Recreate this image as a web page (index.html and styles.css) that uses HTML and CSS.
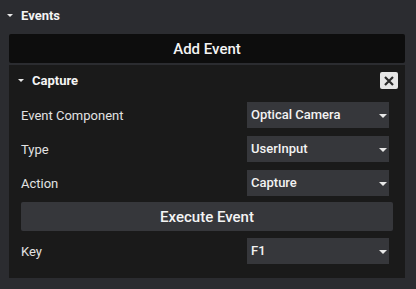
FILE: index.html
```html
<!DOCTYPE html>
<html lang="en">
<head>
<meta charset="UTF-8">
<title>Events</title>
<link rel="stylesheet" href="styles.css">
</head>
<body>
    <div class="section">
        <div class="section-header">
            <span class="caret"></span>
            <span class="section-title">Events</span>
        </div>
        <button type="button" class="add-button">Add Event</button>

        <div class="panel">
            <div class="panel-header">
                <span class="caret"></span>
                <span class="panel-title">Capture</span>
                <button type="button" class="close-button">
                    <svg width="10" height="10" viewBox="0 0 10 10">
                        <path d="M1 1 L9 9 M9 1 L1 9" stroke="#2a2a2a" stroke-width="2.2"/>
                    </svg>
                </button>
            </div>
            <div class="panel-body">
                <div class="row">
                    <span class="label">Event Component</span>
                    <div class="dropdown">Optical Camera<span class="arrow"></span></div>
                </div>
                <div class="row">
                    <span class="label">Type</span>
                    <div class="dropdown">UserInput<span class="arrow"></span></div>
                </div>
                <div class="row">
                    <span class="label">Action</span>
                    <div class="dropdown">Capture<span class="arrow"></span></div>
                </div>
                <button type="button" class="execute-button">Execute Event</button>
                <div class="row">
                    <span class="label">Key</span>
                    <div class="dropdown">F1<span class="arrow"></span></div>
                </div>
            </div>
        </div>
    </div>
</body>
</html>
```

FILE: styles.css
```css
body {
    margin: 0;
    padding: 0;
    width: 416px;
    height: 289px;
    overflow: hidden;
    background: #2b2c30;
    font-family: Roboto, "Liberation Sans", sans-serif;
    color: #f2f2f2;
}

.section {
    padding: 0 11px 0 9px;
}

.section-header {
    display: flex;
    align-items: center;
    height: 30px;
    margin-left: -2px;
}

.caret {
    width: 0;
    height: 0;
    border-left: 3px solid transparent;
    border-right: 3px solid transparent;
    border-top: 3px solid #e8e8e8;
    margin-right: 8px;
}

.section-title,
.panel-title {
    font-size: 13px;
    font-weight: 700;
    color: #f4f4f4;
}

button {
    font-family: Roboto, "Liberation Sans", sans-serif;
    border: none;
    outline: none;
    padding: 0;
}

.add-button {
    display: block;
    width: 100%;
    height: 29px;
    margin-top: 4px;
    background: #0d0d0d;
    color: #f4f4f4;
    font-size: 15px;
    font-weight: 500;
    border-radius: 2px;
}

.panel {
    margin-top: 2px;
    background: #1a1a1a;
    padding-bottom: 14px;
}

.panel-header {
    display: flex;
    align-items: center;
    height: 30px;
    padding: 0 7px 0 9px;
}

.panel-title {
    flex: 1;
}

.close-button {
    width: 18px;
    height: 17px;
    background: #e6e6e6;
    border-radius: 2px;
    display: flex;
    justify-content: center;
    align-items: center;
    margin-top: 1px;
}

.panel-body {
    display: flex;
    flex-direction: column;
    gap: 8px;
    padding: 7px 12px 0 12px;
}

.row {
    display: flex;
    align-items: center;
    justify-content: space-between;
    height: 26px;
}

.label {
    font-size: 13px;
    color: #e2e2e2;
}

.dropdown {
    position: relative;
    width: 138px;
    height: 26px;
    margin-right: 4px;
    padding-left: 4px;
    background: #36373b;
    font-size: 13px;
    font-weight: 500;
    line-height: 26px;
    color: #f2f2f2;
}

.arrow {
    position: absolute;
    right: 2px;
    top: 12px;
    width: 0;
    height: 0;
    border-left: 4px solid transparent;
    border-right: 4px solid transparent;
    border-top: 4px solid #e8e8e8;
}

.execute-button {
    height: 29px;
    margin: -2px 0 -1px;
    background: #36373b;
    color: #f4f4f4;
    font-size: 15px;
    font-weight: 500;
    border-radius: 2px;
}
```
